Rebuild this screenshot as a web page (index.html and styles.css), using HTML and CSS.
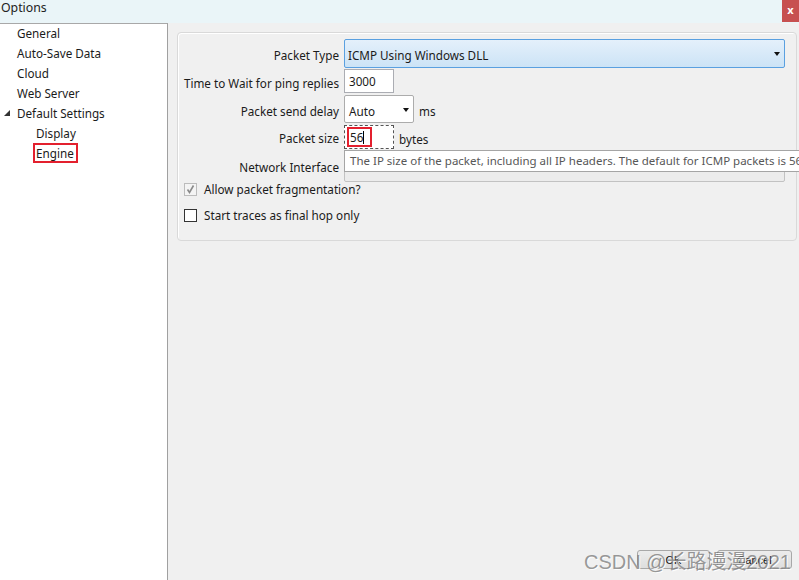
FILE: index.html
```html
<!DOCTYPE html>
<html>

<head>
    <meta http-equiv="Content-Type" content="text/html;charset=UTF-8" />
    <title>Options</title>
    <link rel="stylesheet" href="styles.css">
</head>

<body>
    <div class="window">
        <div class="title_bar">
            <span class="title">Options</span>
            <span class="close_btn">x</span>
        </div>
        <div class="body_wrap">
            <div class="tree">
                <ul>
                    <li class="item">General</li>
                    <li class="item">Auto-Save Data</li>
                    <li class="item">Cloud</li>
                    <li class="item">Web Server</li>
                    <li class="item parent">
                        <svg class="expander" width="7" height="7" viewBox="0 0 7 7"><polygon points="6,0 6,6 0,6" fill="#333" /></svg>
                        Default Settings
                    </li>
                    <li class="item child">Display</li>
                    <li class="item child"><span class="mark">Engine</span></li>
                </ul>
            </div>
            <div class="content">
                <div class="group_box">
                    <div class="form">
                        <label class="row_label r_type">Packet Type</label>
                        <div class="combo combo_blue r_type">
                            <span>ICMP Using Windows DLL</span>
                            <i class="arrow"></i>
                        </div>

                        <label class="row_label r_wait">Time to Wait for ping replies</label>
                        <div class="field_line r_wait">
                            <div class="textbox">3000</div>
                        </div>

                        <label class="row_label r_delay">Packet send delay</label>
                        <div class="field_line r_delay">
                            <div class="combo combo_small">
                                <span>Auto</span>
                                <i class="arrow"></i>
                            </div>
                            <span class="unit">ms</span>
                        </div>

                        <label class="row_label r_size">Packet size</label>
                        <div class="field_line r_size">
                            <div class="textbox focused"><span class="mark_small">56<i class="caret"></i></span></div>
                            <span class="unit">bytes</span>
                            <div class="tooltip">The IP size of the packet, including all IP headers. The default for ICMP packets is 56 bytes.</div>
                        </div>

                        <label class="row_label r_net">Network Interface</label>
                        <div class="combo combo_disabled r_net"></div>
                    </div>

                    <div class="check_row check_first">
                        <span class="checkbox checked">
                            <svg width="11" height="11" viewBox="0 0 11 11"><polyline points="2.5,5.5 4.5,8.5 8.5,1.5" fill="none" stroke="#8a8a8a" stroke-width="1.6" /></svg>
                        </span>
                        <span>Allow packet fragmentation?</span>
                    </div>
                    <div class="check_row">
                        <span class="checkbox"></span>
                        <span>Start traces as final hop only</span>
                    </div>
                </div>

                <div class="footer">
                    <button class="btn btn_ok">OK</button>
                    <button class="btn btn_cancel">Cancel</button>
                    <span class="watermark">CSDN @长路漫漫2021</span>
                </div>
            </div>
        </div>
    </div>
</body>

</html>
```

FILE: styles.css
```css
* {
    margin: 0;
    padding: 0;
    box-sizing: border-box;
}

html,
body {
    width: 799px;
    height: 580px;
    overflow: hidden;
}

body {
    font-family: "Noto Sans", "Open Sans", sans-serif;
    font-size: 11.7px;
    color: #1b1b1b;
    background: #f0f0f0;
}

li {
    list-style: none;
}

.window {
    width: 100%;
    height: 100%;
    display: flex;
    flex-direction: column;
}

/* title bar */
.title_bar {
    height: 23px;
    background: #eaf5f8;
    display: flex;
    align-items: flex-start;
    justify-content: space-between;
}

.title {
    padding: 0 0 0 1px;
    line-height: 16px;
    font-size: 12.3px;
    color: #222;
}

.close_btn {
    width: 17px;
    height: 22px;
    background: #c75050;
    color: #fff;
    font-weight: bold;
    font-size: 11px;
    text-align: center;
    line-height: 19px;
}

.body_wrap {
    flex: 1;
    display: flex;
    min-height: 0;
}

/* tree */
.tree {
    width: 168px;
    background: #fff;
    border-top: 1px solid #a8a8a8;
    border-right: 1px solid #a0a0a0;
}

.tree .item {
    height: 20px;
    line-height: 18px;
    padding-left: 17px;
    position: relative;
    white-space: nowrap;
}

.tree .item.child {
    padding-left: 36px;
}

.tree .item:nth-child(6),
.tree .item:nth-child(7) {
    height: 19px;
}

.tree .parent .expander {
    position: absolute;
    left: 4px;
    top: 6px;
}

.mark {
    display: inline-block;
    margin-left: -3px;
    padding: 0 2px 0 1px;
    line-height: 16px;
    border: 2px solid #e3202e;
}

/* content */
.content {
    flex: 1;
    display: flex;
    flex-direction: column;
    min-width: 0;
}

.group_box {
    margin: 9px 2px 0 9px;
    padding: 6px 11px 17px 6px;
    border: 1px solid #d9d9d9;
    border-radius: 4px;
    box-shadow: inset 1px 1px 0 #fff;
}

.form {
    display: grid;
    grid-template-columns: 155px 1fr;
    column-gap: 5px;
    grid-template-rows: 29px 25px 30px 26px 31px;
}

.row_label {
    display: flex;
    align-items: center;
    justify-content: flex-end;
    padding-top: 3px;
    white-space: nowrap;
    color: #1b1b1b;
}

.row_label.r_size {
    padding-top: 1px;
}

.r_wait {
    margin-top: 1px;
}

.r_delay,
.r_size,
.r_net {
    margin-top: 2px;
}

.field_line {
    display: flex;
    align-items: center;
    position: relative;
}

.combo {
    display: flex;
    align-items: center;
    justify-content: space-between;
    padding: 2px 4px 0 4px;
    border: 1px solid #acacac;
    border-radius: 2px;
    background: #fff;
    height: 100%;
}

.combo_blue {
    background: linear-gradient(#e4f0fb, #cce3f6);
    border-color: #5aa0e0;
    padding-left: 3px;
}

.combo_small {
    width: 70px;
    height: 28px;
    padding-top: 3px;
}

.combo_disabled {
    background: #ececec;
    border-color: #c2c2c2;
}

.arrow {
    width: 0;
    height: 0;
    margin-bottom: 2px;
    border-left: 3.5px solid transparent;
    border-right: 3.5px solid transparent;
    border-top: 4px solid #111;
}

.textbox {
    width: 50px;
    height: 24px;
    background: #fff;
    border: 1px solid #abadb3;
    padding: 3px 0 0 4px;
    line-height: 16px;
    align-self: flex-start;
}

.textbox.focused {
    border: 1px dashed #555;
    padding: 1px 0 0 2px;
}

.mark_small {
    display: inline-block;
    width: 25px;
    height: 20px;
    line-height: 17px;
    border: 2px solid #e3202e;
    padding-left: 1px;
}

.caret {
    display: inline-block;
    width: 1px;
    height: 13px;
    background: #000;
    vertical-align: -2px;
}

.unit {
    margin-left: 5px;
    padding-top: 3px;
}

.tooltip {
    position: absolute;
    left: 0;
    top: 25px;
    height: 22px;
    padding: 1px 0 0 5px;
    line-height: 18px;
    font-size: 11.5px;
    white-space: nowrap;
    background: #fff;
    border: 1px solid #a5a5a5;
    color: #575757;
    z-index: 3;
}

.check_row {
    display: flex;
    align-items: center;
    height: 16px;
}

.check_first {
    margin-top: 1px;
}

.check_row + .check_row {
    margin-top: 10px;
}

.checkbox {
    width: 13px;
    height: 13px;
    border: 1px solid #333;
    background: #fff;
    margin-right: 7px;
    display: flex;
    align-items: center;
    justify-content: center;
}

.checkbox.checked {
    border-color: #bcbcbc;
    background: #f4f4f4;
}

/* footer buttons */
.footer {
    margin-top: auto;
    height: 30px;
    display: flex;
    align-items: flex-start;
    justify-content: flex-end;
    gap: 7px;
    padding-right: 7px;
    position: relative;
}

.btn {
    width: 73px;
    height: 19px;
    font-family: "Liberation Sans", sans-serif;
    font-size: 11px;
    background: linear-gradient(#ececec, #dedede);
    border: 1px solid #a8a8a8;
    border-radius: 3px;
    color: #111;
}

.btn_cancel {
    width: 75px;
}

.watermark {
    position: absolute;
    right: 8px;
    top: -4px;
    font-family: "Liberation Sans", "Noto Sans CJK SC", sans-serif;
    font-size: 20px;
    color: rgba(110, 110, 110, 0.7);
    text-shadow: 1px 1px 0 rgba(255, 255, 255, 0.9);
    white-space: nowrap;
    pointer-events: none;
}
```
